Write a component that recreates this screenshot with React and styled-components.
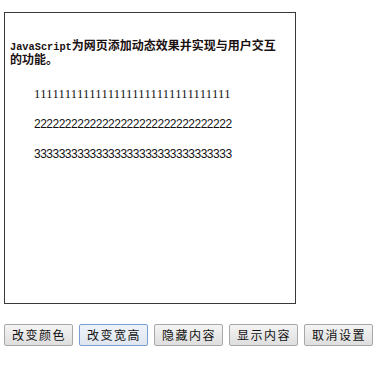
import React from 'react';
import styled, { createGlobalStyle, css } from 'styled-components';

const GlobalStyle = createGlobalStyle`
  body {
    margin: 0;
    background: #fff;
    font-family: "Noto Sans CJK SC", sans-serif;
  }
`;

const Page = styled.div`
  padding: 12px 0 0 4px;
`;

const Box = styled.div`
  width: 280px;
  height: 290px;
  border: 1px solid #3a3a3a;
  padding: 0 5px;
`;

const Heading = styled.h4`
  margin: 25px 0 0;
  font-family: "Noto Sans CJK SC", sans-serif;
  font-size: 12px;
  line-height: 14px;
  font-weight: 700;
  color: #1a1010;
  width: 272px;
`;

const Latin = styled.span`
  font-family: "Liberation Mono", monospace;
  font-size: 10.3px;
  line-height: 1;
`;

const Lines = styled.div`
  display: flex;
  flex-direction: column;
  gap: 16px;
  margin: 21px 0 0 24px;
`;

const Line = styled.p`
  margin: 0;
  font-size: 12px;
  line-height: 14px;
  color: #111;
  ${({ $serif }) => $serif
    ? css`
      font-family: "Liberation Serif", serif;
      font-size: 12.5px;
      letter-spacing: 0.35px;
    `
    : css`
      font-family: "Liberation Sans", sans-serif;
      letter-spacing: -0.5px;
    `}
`;

const Toolbar = styled.div`
  display: flex;
  gap: 6px;
  margin-top: 20px;
`;

const Button = styled.button`
  width: 69px;
  height: 22px;
  padding: 0 0 0 1px;
  font-family: "Noto Sans CJK SC", sans-serif;
  font-size: 12px;
  font-weight: 400;
  letter-spacing: 1.5px;
  line-height: 20px;
  color: #111;
  border-radius: 2px;
  border: 1px solid ${({ $active }) => ($active ? '#7b9fd0' : '#a8a8a8')};
  background: ${({ $active }) => ($active
    ? 'linear-gradient(#eef3fa, #dfe6ef)'
    : 'linear-gradient(#f4f4f4, #dedede)')};
  cursor: pointer;
`;

const labels = ['改变颜色', '改变宽高', '隐藏内容', '显示内容', '取消设置'];

const App = () => (
  <Page>
    <GlobalStyle />
    <Box>
      <Heading>
        <Latin>JavaScript</Latin>为网页添加动态效果并实现与用户交互的功能。
      </Heading>
      <Lines>
        <Line $serif>{'1'.repeat(32)}</Line>
        <Line>{'2'.repeat(32)}</Line>
        <Line>{'3'.repeat(32)}</Line>
      </Lines>
    </Box>
    <Toolbar>
      {labels.map((label, i) => (
        <Button key={label} $active={i === 1}>{label}</Button>
      ))}
    </Toolbar>
  </Page>
);

export default App;
